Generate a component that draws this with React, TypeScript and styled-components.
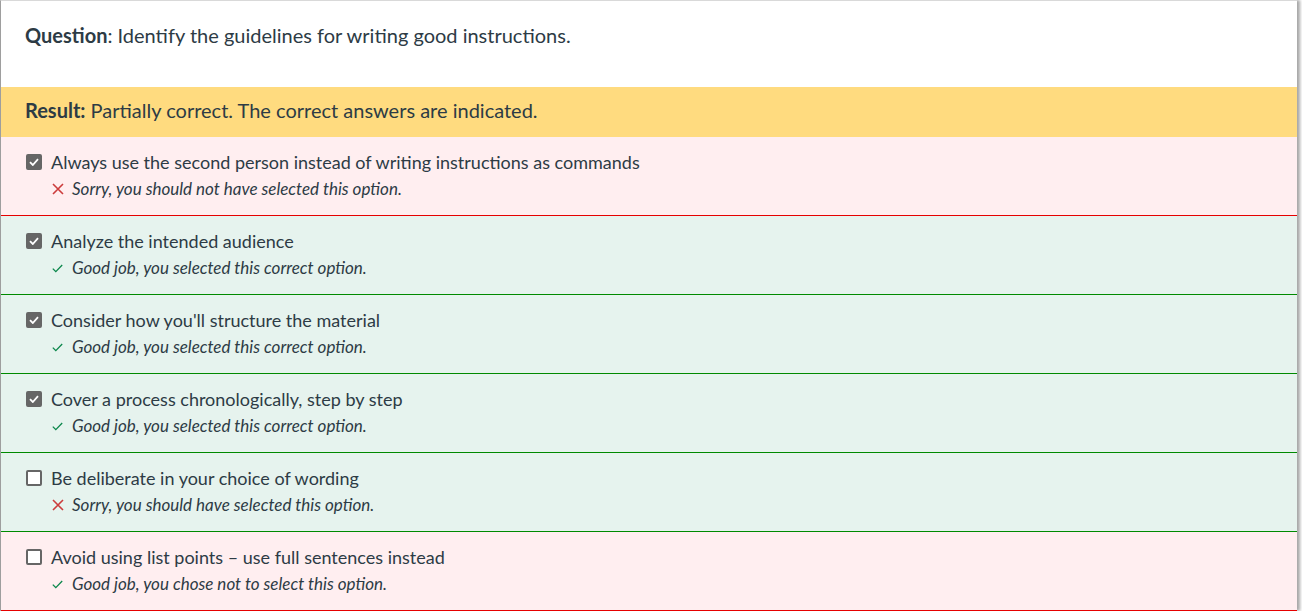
import React from "react";
import styled, { createGlobalStyle } from "styled-components";

const Global = createGlobalStyle`
  html, body { margin: 0; padding: 0; background: #fff; }
  body { font-family: Lato, "Noto Sans", sans-serif; color: #2d3b45; }
`;

const Card = styled.div`
  width: 1296px;
  border-left: 1px solid #9e9e9e;
  border-top: 1px solid #d9d9d9;
  box-shadow: 3px 0 3px rgba(0, 0, 0, 0.35);
  background: #fff;
`;

const QuestionBar = styled.div`
  height: 86px;
  padding: 21px 24px 0;
  box-sizing: border-box;
  font-size: 20px;
  line-height: 26px;
`;

const ResultBar = styled.div`
  height: 50px;
  background: #ffdb7f;
  padding: 0 24px 4px;
  box-sizing: border-box;
  display: flex;
  align-items: center;
  font-size: 20px;
`;

const Row = styled.div<{ $ok: boolean }>`
  height: 79px;
  box-sizing: border-box;
  padding: 13px 25px 0;
  background: ${(p) => (p.$ok ? "#e6f3ee" : "#ffeef0")};
  border-bottom: 1px solid ${(p) => (p.$ok ? "#008a00" : "#e60000")};
`;

const Line = styled.div`
  display: flex;
  align-items: center;
  gap: 9px;
  font-size: 18px;
  line-height: 24px;
`;

const Box = styled.span<{ $checked: boolean }>`
  width: 16px;
  height: 16px;
  flex: none;
  box-sizing: border-box;
  border-radius: 2px;
  display: inline-flex;
  align-items: center;
  justify-content: center;
  background: ${(p) => (p.$checked ? "#666666" : "#fff")};
  border: 2px solid #666666;
`;

const Feedback = styled.div`
  display: flex;
  align-items: center;
  gap: 8px;
  margin-top: 4px;
  padding-left: 25px;
  font-size: 17px;
  font-style: italic;
  line-height: 22px;
`;

const IconWrap = styled.span`
  width: 13px;
  display: inline-flex;
  justify-content: center;
`;

const Check = () => (
  <svg width="10" height="8" viewBox="0 0 10 8">
    <path d="M1 4.2 L3.8 7 L9 1.2" stroke="#fff" strokeWidth="1.8" fill="none" />
  </svg>
);

const Ok = () => (
  <svg width="11" height="9" viewBox="0 0 11 9">
    <path d="M0.8 4.6 L3.8 7.6 L10.2 1" stroke="#0b874b" strokeWidth="1.3" fill="none" />
  </svg>
);

const Bad = () => (
  <svg width="12" height="12" viewBox="0 0 12 12">
    <path d="M1 1 L11 11 M11 1 L1 11" stroke="#cc3c3c" strokeWidth="1.6" fill="none" />
  </svg>
);

type Item = { text: string; checked: boolean; ok: boolean; good: boolean; msg: string };

const items: Item[] = [
  { text: "Always use the second person instead of writing instructions as commands", checked: true, ok: false, good: false, msg: "Sorry, you should not have selected this option." },
  { text: "Analyze the intended audience", checked: true, ok: true, good: true, msg: "Good job, you selected this correct option." },
  { text: "Consider how you'll structure the material", checked: true, ok: true, good: true, msg: "Good job, you selected this correct option." },
  { text: "Cover a process chronologically, step by step", checked: true, ok: true, good: true, msg: "Good job, you selected this correct option." },
  { text: "Be deliberate in your choice of wording", checked: false, ok: true, good: false, msg: "Sorry, you should have selected this option." },
  { text: "Avoid using list points – use full sentences instead", checked: false, ok: false, good: true, msg: "Good job, you chose not to select this option." },
];

export default function App() {
  return (
    <>
      <Global />
      <Card>
        <QuestionBar>
          <b>Question</b>: Identify the guidelines for writing good instructions.
        </QuestionBar>
        <ResultBar>
          <b>Result:</b>&nbsp;Partially correct. The correct answers are indicated.
        </ResultBar>
        {items.map((it, i) => (
          <Row key={i} $ok={it.ok}>
            <Line>
              <Box $checked={it.checked}>{it.checked && <Check />}</Box>
              {it.text}
            </Line>
            <Feedback>
              <IconWrap>{it.good ? <Ok /> : <Bad />}</IconWrap>
              {it.msg}
            </Feedback>
          </Row>
        ))}
      </Card>
    </>
  );
}
